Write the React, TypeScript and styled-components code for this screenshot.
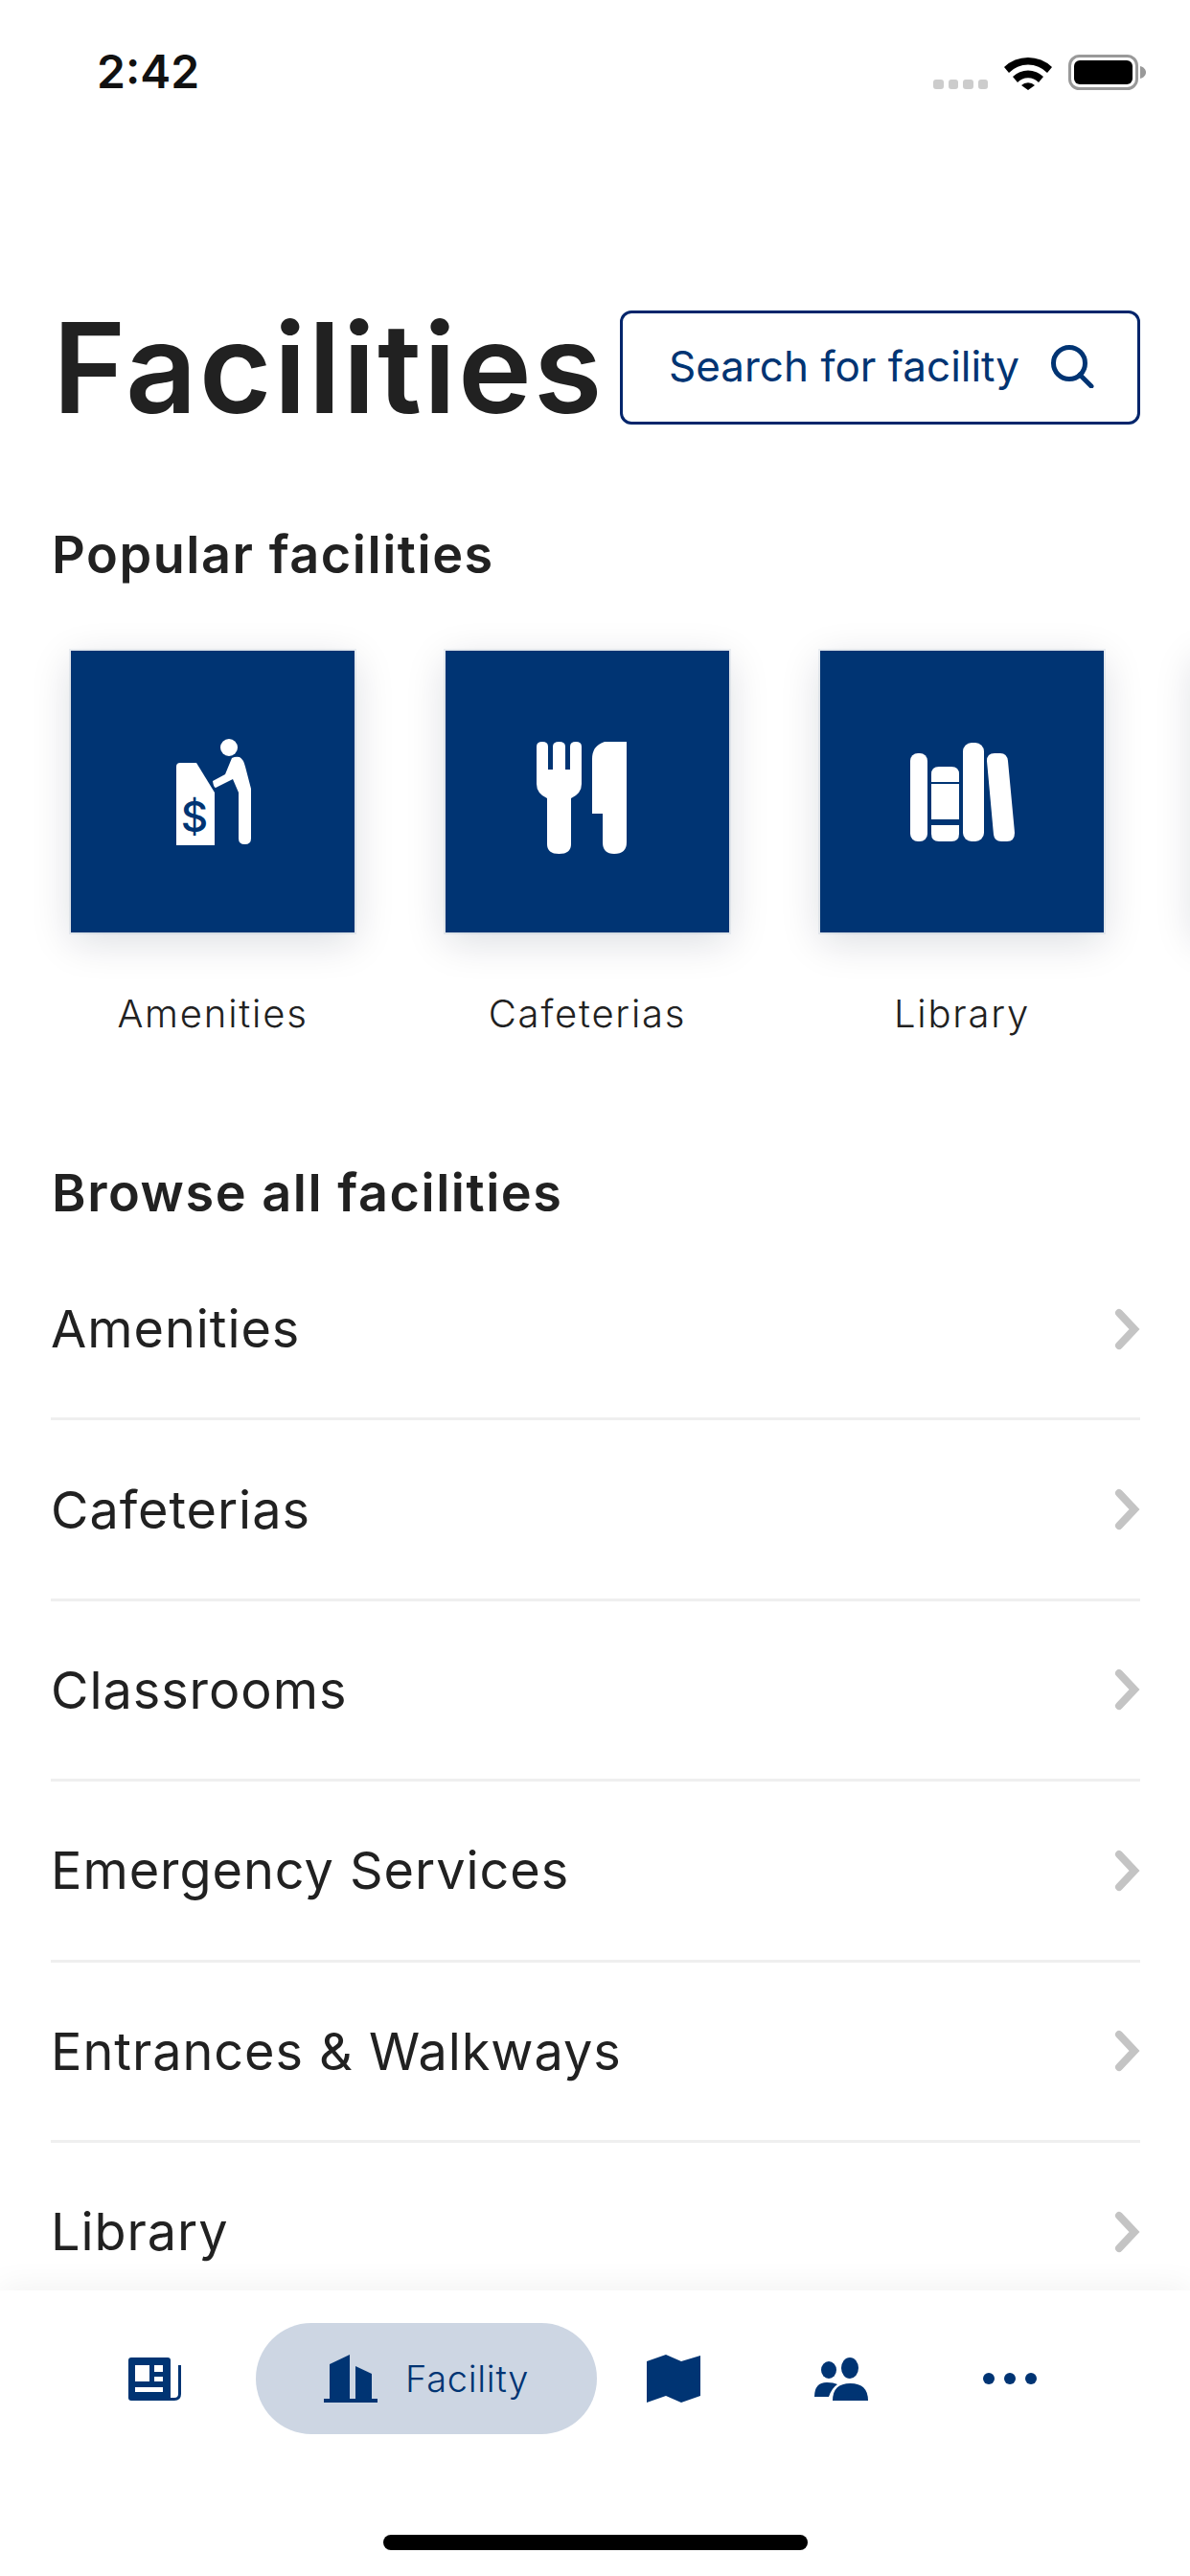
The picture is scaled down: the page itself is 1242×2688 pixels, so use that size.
import React from "react";
import styled, { createGlobalStyle } from "styled-components";

const navy = "#003473";

const GlobalStyle = createGlobalStyle`
  html, body {
    margin: 0;
    padding: 0;
    background: #ffffff;
  }
  body {
    font-family: Inter, "Liberation Sans", sans-serif;
    color: #212121;
  }
`;

const Screen = styled.div`
  width: 1242px;
  height: 2688px;
  display: flex;
  flex-direction: column;
  overflow: hidden;
  background: #ffffff;
`;

const StatusBar = styled.div`
  flex: none;
  height: 150px;
  display: flex;
  align-items: flex-start;
  justify-content: space-between;
  padding: 46px 46px 0 101px;
  box-sizing: border-box;
`;

const Time = styled.span`
  font-size: 48px;
  line-height: 58px;
  font-weight: 600;
  color: #111111;
`;

const StatusIcons = styled.div`
  display: flex;
  align-items: flex-end;
  margin-top: 11px;
`;

const SignalDots = styled.div`
  display: flex;
  gap: 5px;
  margin: 0 17px 1px 0;
`;

const SignalDot = styled.span`
  width: 10.5px;
  height: 10.5px;
  border-radius: 3px;
  background: #cccccc;
`;

const TitleRow = styled.div`
  flex: none;
  display: flex;
  align-items: center;
  justify-content: space-between;
  margin-top: 174px;
  padding: 0 52px 0 55px;
`;

const Title = styled.h1`
  margin: 0;
  font-size: 130px;
  line-height: 119px;
  font-weight: 600;
  letter-spacing: 2.1px;
  color: #212121;
`;

const SearchBox = styled.div`
  width: 543px;
  height: 119px;
  box-sizing: border-box;
  border: 3px solid #00256b;
  border-radius: 12px;
  display: flex;
  align-items: center;
  justify-content: space-between;
  padding: 0 45px 3px 48px;
  color: ${navy};
  font-size: 44px;
`;

const SectionTitle = styled.h2<{ $top: number }>`
  margin: ${(p) => p.$top}px 0 0;
  padding-left: 54px;
  flex: none;
  font-size: 54px;
  line-height: 64px;
  font-weight: 600;
  letter-spacing: 1.55px;
  color: #212121;
`;

const Carousel = styled.div`
  flex: none;
  display: flex;
  gap: 95px;
  padding: 68px 0 0 74px;
  overflow: hidden;
`;

const Card = styled.div`
  flex: none;
  width: 296px;
  display: flex;
  flex-direction: column;
  align-items: center;
`;

const Tile = styled.div`
  width: 296px;
  height: 294px;
  background: ${navy};
  box-shadow: 0 0 0 2px rgba(0, 52, 115, 0.07), 0 10px 40px rgba(0, 20, 50, 0.14);
  display: flex;
  align-items: center;
  justify-content: center;
`;

const CardLabel = styled.span`
  margin-top: 60px;
  font-size: 40px;
  line-height: 50px;
  font-weight: 300;
  letter-spacing: 1.8px;
  white-space: nowrap;
  color: #212121;
`;

const List = styled.div`
  flex: 1;
  min-height: 0;
  margin-top: 17px;
  padding: 0 52px 0 53px;
  overflow: hidden;
`;

const Row = styled.div`
  height: 188.4px;
  box-sizing: border-box;
  border-bottom: 3px solid #efefef;
  display: flex;
  align-items: center;
  justify-content: space-between;
  font-size: 54px;
  letter-spacing: 0.95px;
  color: #212121;
`;

const TabBar = styled.div`
  flex: none;
  height: 298px;
  box-sizing: border-box;
  padding-top: 34px;
  background: #ffffff;
  box-shadow: 0 -6px 30px rgba(0, 0, 0, 0.05);
  display: flex;
  flex-direction: column;
  align-items: center;
`;

const TabRow = styled.div`
  width: 100%;
  height: 116px;
  box-sizing: border-box;
  padding-left: 134px;
  display: flex;
  align-items: center;
`;

const TabSlot = styled.div<{ $gap?: number }>`
  display: flex;
  margin-left: ${(p) => p.$gap ?? 0}px;
`;

const ActivePill = styled.div`
  width: 356px;
  height: 116px;
  margin-left: 78px;
  border-radius: 58px;
  background: #cdd6e3;
  box-sizing: border-box;
  padding-left: 71px;
  display: flex;
  align-items: center;
  gap: 29px;
  color: ${navy};
  font-size: 38px;
  font-weight: 300;
  letter-spacing: 0.7px;
`;

const HomeIndicator = styled.div`
  width: 443px;
  height: 16px;
  margin-top: 105px;
  border-radius: 8px;
  background: #000000;
`;

const WifiIcon = () => (
  <svg width="50" height="37" viewBox="0 0 50 37">
    <path d="M0 13 A36 36 0 0 1 50 13 L45 19 A28 28 0 0 0 5 19 Z" fill="#000" />
    <path d="M9 23 A23 23 0 0 1 41 23 L36 29 A15 15 0 0 0 14 29 Z" fill="#000" />
    <path d="M18 32 A10 10 0 0 1 32 32 L25 37 Z" fill="#000" />
  </svg>
);

const BatteryIcon = () => (
  <svg width="81" height="37" viewBox="0 0 81 37" style={{ marginLeft: 17 }}>
    <rect x="1.5" y="1.5" width="70" height="34" rx="10" fill="none" stroke="#999" strokeWidth="3" />
    <rect x="6" y="6" width="61" height="25" rx="6" fill="#000" />
    <path d="M75 12 C79 13 81 16 81 18.5 C81 21 79 24 75 25 Z" fill="#999" />
  </svg>
);

const SearchIcon = () => (
  <svg width="46" height="46" viewBox="0 0 46 46" fill="none" stroke={navy} strokeWidth="5">
    <circle cx="20" cy="20" r="16.5" />
    <path d="M31 32 L43 44" strokeLinecap="round" />
  </svg>
);

const Chevron = () => (
  <svg width="30" height="46" viewBox="0 0 30 46" fill="none" stroke="#c4c4c4" strokeWidth="8" strokeLinecap="round">
    <path d="M8 6 L24 23 L8 40" />
  </svg>
);

const TileIcon = ({ children }: { children: React.ReactNode }) => (
  <svg width="140" height="140" viewBox="-10 -10 140 140" fill="#ffffff">
    {children}
  </svg>
);

const AtmIcon = () => (
  <TileIcon>
    <path d="M22 116 V34 Q22 30 26 30 H43 L62 61 V116 Z" />
    <text x="41" y="102" textAnchor="middle" fontFamily="Inter, sans-serif" fontSize="44" fontWeight="500" fill={navy}>
      $
    </text>
    <circle cx="77" cy="14" r="9" />
    <path d="M80 25 Q84 23 88 24 Q92 26 94 34 L100 57 V109 Q100 115 93.5 115 Q87 115 87 109 V61 L81 47 L63 56 Q61 56 60 49 L73 42 Z" />
  </TileIcon>
);

const CutleryIcon = () => (
  <TileIcon>
    <path d="M7 13 Q7 8 13 8 Q19 8 19 13 V37 H24 V13 Q24 8 30.5 8 Q37 8 37 13 V37 H42 V13 Q42 8 48 8 Q54 8 54 13 V52 Q54 62 43 67 V115 Q43 125 30.5 125 Q18 125 18 115 V67 Q7 62 7 52 Z" />
    <path d="M101 8 H78 Q65 12 65 26 V83 H76 V113 Q76 125 88 125 Q101 125 101 113 Z" />
  </TileIcon>
);

const BooksIcon = () => (
  <TileIcon>
    <rect x="6" y="20" width="18" height="92" rx="8" />
    <path d="M28 50 V42 Q28 34 36 34 H49 Q57 34 57 42 V50 Z" />
    <rect x="28" y="52" width="29" height="37" />
    <path d="M28 95 H57 V104 Q57 112 49 112 H36 Q28 112 28 104 Z" />
    <rect x="61" y="9" width="22" height="103" rx="9" />
    <path d="M86 28 Q86 20 94 20 H100 Q107 20 108 28 L115 103 Q115 112 107 112 H101 Q94 112 93 105 Z" />
  </TileIcon>
);

const NewsIcon = () => (
  <svg width="55" height="45" viewBox="0 0 55 45">
    <rect x="0" y="0" width="44" height="45" rx="3" fill={navy} />
    <path d="M40 43.5 H48 Q53.5 43.5 53.5 38 V8" fill="none" stroke={navy} strokeWidth="3" />
    <rect x="7" y="8" width="15" height="17" fill="#fff" />
    <rect x="27" y="8" width="9" height="7" fill="#fff" />
    <rect x="27" y="20" width="9" height="5" fill="#fff" />
    <rect x="7" y="31" width="29" height="5" fill="#fff" />
  </svg>
);

const BuildingIcon = () => (
  <svg width="56" height="50" viewBox="0 0 56 50" fill={navy}>
    <path d="M0 46 H6 V10 L27 0 V46 H33 V12 L50 20 V46 H56 V50 H0 Z" />
  </svg>
);

const MapIcon = () => (
  <svg width="56" height="50" viewBox="0 0 56 50" fill={navy}>
    <path d="M0 7 L20 0 L36 7 L56 1 V43 L36 50 L20 43 L0 50 Z" />
  </svg>
);

const PeopleIcon = () => (
  <svg width="56" height="45" viewBox="0 0 56 45" fill={navy}>
    <ellipse cx="15" cy="13" rx="8" ry="9" />
    <ellipse cx="37" cy="11" rx="9" ry="11" />
    <path d="M19 45 Q19 27 37.5 27 Q56 27 56 45 Z" />
    <path d="M0 41 Q0 26 13 26 Q20 26 24 28 Q18 32 15 41 Z" />
  </svg>
);

const MoreIcon = () => (
  <svg width="56" height="12" viewBox="0 0 56 12" fill={navy}>
    <ellipse cx="6" cy="6" rx="6" ry="6" />
    <ellipse cx="28" cy="6" rx="6" ry="6" />
    <ellipse cx="50" cy="6" rx="6" ry="6" />
  </svg>
);

const popular = [
  { name: "Amenities", icon: <AtmIcon /> },
  { name: "Cafeterias", icon: <CutleryIcon /> },
  { name: "Library", icon: <BooksIcon /> },
];

const facilities = ["Amenities", "Cafeterias", "Classrooms", "Emergency Services", "Entrances & Walkways", "Library"];

export default function App() {
  return (
    <Screen>
      <GlobalStyle />
      <StatusBar>
        <Time>2:42</Time>
        <StatusIcons>
          <SignalDots>
            <SignalDot />
            <SignalDot />
            <SignalDot />
            <SignalDot />
          </SignalDots>
          <WifiIcon />
          <BatteryIcon />
        </StatusIcons>
      </StatusBar>

      <TitleRow>
        <Title>Facilities</Title>
        <SearchBox>
          Search for facility
          <SearchIcon />
        </SearchBox>
      </TitleRow>

      <SectionTitle $top={104}>Popular facilities</SectionTitle>
      <Carousel>
        {popular.map((item) => (
          <Card key={item.name}>
            <Tile>{item.icon}</Tile>
            <CardLabel>{item.name}</CardLabel>
          </Card>
        ))}
        {/* next tile only peeks in at the right edge */}
        <Card>
          <Tile />
        </Card>
      </Carousel>

      <SectionTitle $top={130}>Browse all facilities</SectionTitle>
      <List>
        {facilities.map((name) => (
          <Row key={name}>
            {name}
            <Chevron />
          </Row>
        ))}
      </List>

      <TabBar>
        <TabRow>
          <TabSlot>
            <NewsIcon />
          </TabSlot>
          <ActivePill>
            <BuildingIcon />
            Facility
          </ActivePill>
          <TabSlot $gap={52}>
            <MapIcon />
          </TabSlot>
          <TabSlot $gap={119}>
            <PeopleIcon />
          </TabSlot>
          <TabSlot $gap={120}>
            <MoreIcon />
          </TabSlot>
        </TabRow>
        <HomeIndicator />
      </TabBar>
    </Screen>
  );
}
